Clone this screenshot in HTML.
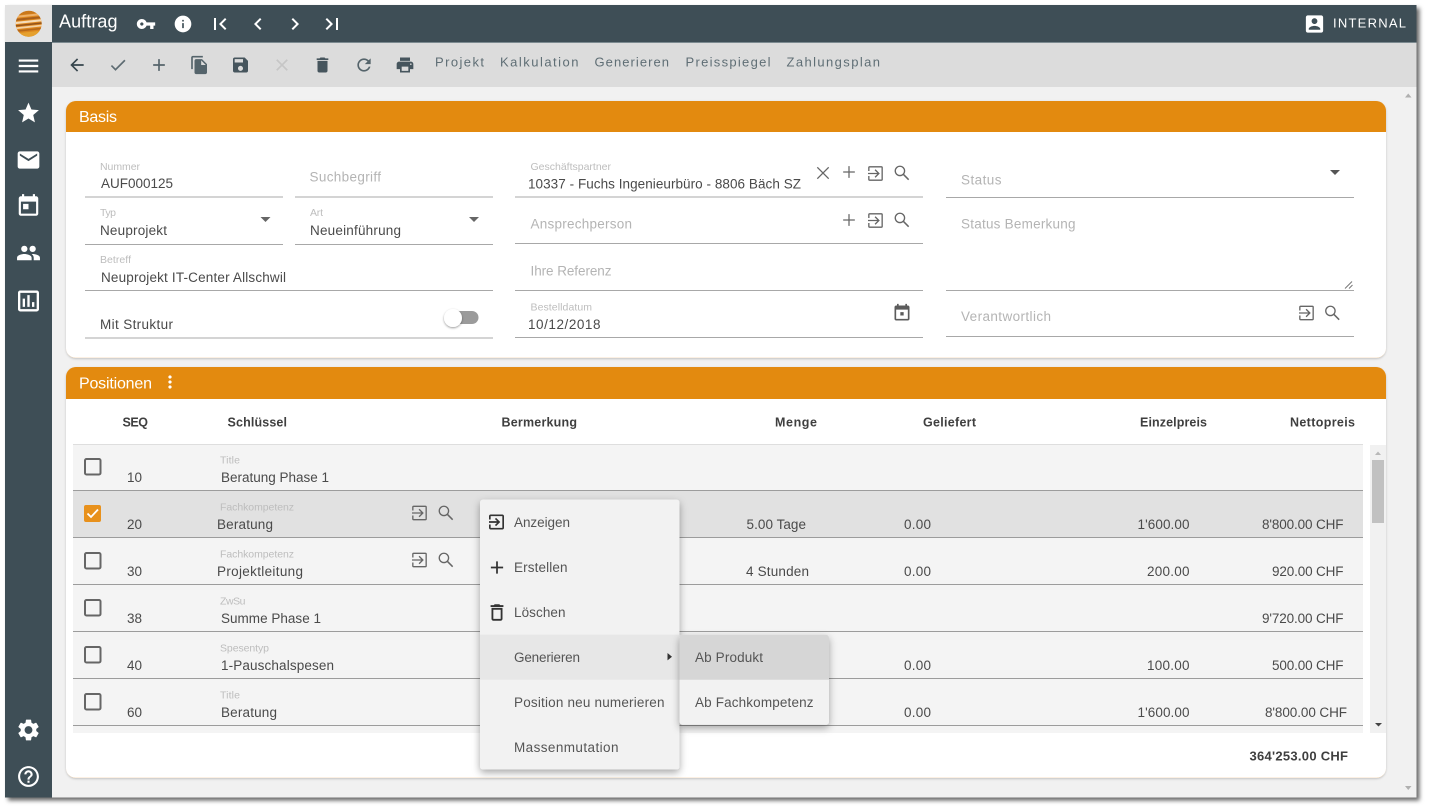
<!DOCTYPE html>
<html><head><meta charset="utf-8"><title>Auftrag</title>
<style>
html,body{margin:0;padding:0;background:#fff;width:1430px;height:811px;overflow:hidden}
svg{display:block}
text{font-family:"Liberation Sans",sans-serif;font-size:13.5px;fill:#4a4a4a}
.v{fill:#4a4a4a}
.l{font-size:10.5px;fill:#bdbdbd}
.p{fill:#b4b4b4}
.h{font-weight:bold;font-size:12.5px;fill:#3f3f3f}
.tb{font-size:13px;fill:#5f6e75}
.m{font-size:13.5px;fill:#555}
.t{font-size:16px;fill:#fff}
.ln{stroke:#a8a8a8;stroke-width:1;fill:none}
.rl{stroke:#9c9c9c;stroke-width:1}
.ck{fill:none;stroke:#666;stroke-width:2}
</style></head><body>
<svg xmlns="http://www.w3.org/2000/svg" width="1430" height="811" viewBox="0 0 1430 811">
<defs>
<filter id="fr" x="-2%" y="-2%" width="104%" height="104%"><feDropShadow dx="3" dy="3" stdDeviation="2" flood-color="#000" flood-opacity=".6"/></filter>
<filter id="cd" x="-2%" y="-5%" width="104%" height="110%"><feDropShadow dx="0" dy="1" stdDeviation="1" flood-color="#000" flood-opacity=".2"/></filter>
<filter id="mn" x="-15%" y="-15%" width="130%" height="130%"><feDropShadow dx="0" dy="3" stdDeviation="4" flood-color="#000" flood-opacity=".35"/></filter>
<filter id="sw" x="-50%" y="-50%" width="200%" height="200%"><feDropShadow dx="0" dy="1" stdDeviation="1" flood-color="#000" flood-opacity=".4"/></filter>
<clipPath id="lg"><circle cx="28.7" cy="23.7" r="13"/></clipPath>
<symbol id="menu" viewBox="0 0 24 24"><path d="M3 18h18v-2H3v2zm0-5h18v-2H3v2zm0-7v2h18V6H3z"/></symbol>
<symbol id="star" viewBox="0 0 24 24"><path d="M12 17.27L18.18 21l-1.64-7.03L22 9.24l-7.19-.61L12 2 9.19 8.63 2 9.24l5.46 4.73L5.82 21z"/></symbol>
<symbol id="mail" viewBox="0 0 24 24"><path d="M20 4H4c-1.1 0-1.99.9-1.99 2L2 18c0 1.1.9 2 2 2h16c1.1 0 2-.9 2-2V6c0-1.1-.9-2-2-2zm0 4l-8 5-8-5V6l8 5 8-5v2z"/></symbol>
<symbol id="today" viewBox="0 0 24 24"><path d="M19 3h-1V1h-2v2H8V1H6v2H5c-1.11 0-1.99.9-1.99 2L3 19c0 1.1.89 2 2 2h14c1.1 0 2-.9 2-2V5c0-1.1-.9-2-2-2zm0 16H5V8h14v11zM7 10h5v5H7z"/></symbol>
<symbol id="event" viewBox="0 0 24 24"><path d="M19 3h-1V1h-2v2H8V1H6v2H5c-1.11 0-1.99.9-1.99 2L3 19c0 1.1.89 2 2 2h14c1.1 0 2-.9 2-2V5c0-1.1-.9-2-2-2zm0 16H5V8h14v11zM10 11h4v4h-4z"/></symbol>
<symbol id="people" viewBox="0 0 24 24"><path d="M16 11c1.66 0 2.99-1.34 2.99-3S17.66 5 16 5c-1.66 0-3 1.34-3 3s1.34 3 3 3zm-8 0c1.66 0 2.99-1.34 2.99-3S9.66 5 8 5C6.34 5 5 6.34 5 8s1.34 3 3 3zm0 2c-2.33 0-7 1.17-7 3.5V19h14v-2.5c0-2.33-4.67-3.5-7-3.5zm8 0c-.29 0-.62.02-.97.05 1.16.84 1.97 1.97 1.97 3.45V19h6v-2.5c0-2.33-4.67-3.5-7-3.5z"/></symbol>
<symbol id="poll" viewBox="0 0 24 24"><path d="M19 3H5c-1.1 0-2 .9-2 2v14c0 1.1.9 2 2 2h14c1.1 0 2-.9 2-2V5c0-1.1-.9-2-2-2zm0 16H5V5h14v14zM7 10h2v7H7zm4-3h2v10h-2zm4 6h2v4h-2z"/></symbol>
<symbol id="gear" viewBox="0 0 24 24"><path d="M19.14 12.94c.04-.3.06-.61.06-.94 0-.32-.02-.64-.07-.94l2.03-1.58c.18-.14.23-.41.12-.61l-1.92-3.32c-.12-.22-.37-.29-.59-.22l-2.39.96c-.5-.38-1.03-.7-1.62-.94l-.36-2.54c-.04-.24-.24-.41-.48-.41h-3.84c-.24 0-.43.17-.47.41l-.36 2.54c-.59.24-1.13.57-1.62.94l-2.39-.96c-.22-.08-.47 0-.59.22L2.74 8.87c-.12.21-.08.47.12.61l2.03 1.58c-.05.3-.09.63-.09.94s.02.64.07.94l-2.03 1.58c-.18.14-.23.41-.12.61l1.92 3.32c.12.22.37.29.59.22l2.39-.96c.5.38 1.03.7 1.62.94l.36 2.54c.05.24.24.41.48.41h3.84c.24 0 .44-.17.47-.41l.36-2.54c.59-.24 1.13-.56 1.62-.94l2.39.96c.22.08.47 0 .59-.22l1.92-3.32c.12-.22.07-.47-.12-.61l-2.01-1.58zM12 15.6c-1.98 0-3.6-1.62-3.6-3.6s1.62-3.6 3.6-3.6 3.6 1.62 3.6 3.6-1.62 3.6-3.6 3.6z"/></symbol>
<symbol id="help" viewBox="0 0 24 24"><path d="M11 18h2v-2h-2v2zm1-16C6.48 2 2 6.48 2 12s4.48 10 10 10 10-4.48 10-10S17.52 2 12 2zm0 18c-4.41 0-8-3.59-8-8s3.59-8 8-8 8 3.59 8 8-3.59 8-8 8zm0-14c-2.21 0-4 1.79-4 4h2c0-1.1.9-2 2-2s2 .9 2 2c0 2-3 1.75-3 5h2c0-2.25 3-2.5 3-5 0-2.21-1.79-4-4-4z"/></symbol>
<symbol id="key" viewBox="0 0 24 24"><path d="M12.65 10C11.83 7.67 9.61 6 7 6c-3.31 0-6 2.69-6 6s2.69 6 6 6c2.61 0 4.83-1.67 5.65-4H17v4h4v-4h2v-4H12.65zM7 14c-1.1 0-2-.9-2-2s.9-2 2-2 2 .9 2 2-.9 2-2 2z"/></symbol>
<symbol id="info" viewBox="0 0 24 24"><path d="M12 2C6.48 2 2 6.48 2 12s4.48 10 10 10 10-4.48 10-10S17.52 2 12 2zm1 15h-2v-6h2v6zm0-8h-2V7h2v2z"/></symbol>
<symbol id="first" viewBox="0 0 24 24"><path d="M18.41 16.59L13.82 12l4.59-4.59L17 6l-6 6 6 6zM6 6h2v12H6z"/></symbol>
<symbol id="left" viewBox="0 0 24 24"><path d="M15.41 7.41L14 6l-6 6 6 6 1.41-1.41L10.83 12z"/></symbol>
<symbol id="right" viewBox="0 0 24 24"><path d="M10 6L8.59 7.41 13.17 12l-4.58 4.59L10 18l6-6z"/></symbol>
<symbol id="last" viewBox="0 0 24 24"><path d="M5.59 7.41L10.18 12l-4.59 4.59L7 18l6-6-6-6zM16 6h2v12h-2z"/></symbol>
<symbol id="acct" viewBox="0 0 24 24"><path d="M3 5v14c0 1.1.89 2 2 2h14c1.1 0 2-.9 2-2V5c0-1.1-.9-2-2-2H5c-1.11 0-2 .9-2 2zm12 4c0 1.66-1.34 3-3 3s-3-1.34-3-3 1.34-3 3-3 3 1.34 3 3zm-9 8c0-2 4-3.1 6-3.1s6 1.1 6 3.1v1H6v-1z"/></symbol>
<symbol id="back" viewBox="0 0 24 24"><path d="M20 11H7.83l5.59-5.59L12 4l-8 8 8 8 1.41-1.41L7.83 13H20v-2z"/></symbol>
<symbol id="check" viewBox="0 0 24 24"><path d="M9 16.17L4.83 12l-1.42 1.41L9 19 21 7l-1.41-1.41z"/></symbol>
<symbol id="add" viewBox="0 0 24 24"><path d="M19 13h-6v6h-2v-6H5v-2h6V5h2v6h6v2z"/></symbol>
<symbol id="copy" viewBox="0 0 24 24"><path d="M16 1H4c-1.1 0-2 .9-2 2v14h2V3h12V1zm-1 4l6 6v10c0 1.1-.9 2-2 2H7.99C6.89 23 6 22.1 6 21l.01-14c0-1.1.89-2 1.99-2h7zm-1 7h5.5L14 6.5V12z"/></symbol>
<symbol id="save" viewBox="0 0 24 24"><path d="M17 3H5c-1.11 0-2 .9-2 2v14c0 1.1.89 2 2 2h14c1.1 0 2-.9 2-2V7l-4-4zm-5 16c-1.66 0-3-1.34-3-3s1.34-3 3-3 3 1.34 3 3-1.34 3-3 3zm3-10H5V5h10v4z"/></symbol>
<symbol id="close" viewBox="0 0 24 24"><path d="M19 6.41L17.59 5 12 10.59 6.41 5 5 6.41 10.59 12 5 17.59 6.41 19 12 13.41 17.59 19 19 17.59 13.41 12z"/></symbol>
<symbol id="del" viewBox="0 0 24 24"><path d="M6 19c0 1.1.9 2 2 2h8c1.1 0 2-.9 2-2V7H6v12zM19 4h-3.5l-1-1h-5l-1 1H5v2h14V4z"/></symbol>
<symbol id="delo" viewBox="0 0 24 24"><path d="M6 19c0 1.1.9 2 2 2h8c1.1 0 2-.9 2-2V7H6v12zM8 9h8v10H8V9zm7.5-5l-1-1h-5l-1 1H5v2h14V4z"/></symbol>
<symbol id="refresh" viewBox="0 0 24 24"><path d="M17.65 6.35C16.2 4.9 14.21 4 12 4c-4.42 0-7.99 3.58-7.99 8s3.57 8 7.99 8c3.73 0 6.84-2.55 7.73-6h-2.08c-.82 2.33-3.04 4-5.65 4-3.31 0-6-2.69-6-6s2.69-6 6-6c1.66 0 3.14.69 4.22 1.78L13 11h7V4l-2.35 2.35z"/></symbol>
<symbol id="print" viewBox="0 0 24 24"><path d="M19 8H5c-1.66 0-3 1.34-3 3v6h4v4h12v-4h4v-6c0-1.66-1.34-3-3-3zm-3 11H8v-5h8v5zm3-7c-.55 0-1-.45-1-1s.45-1 1-1 1 .45 1 1-.45 1-1 1zm-1-9H6v4h12V3z"/></symbol>
<symbol id="input" viewBox="0 0 24 24"><path d="M10.09 15.59L11.5 17l5-5-5-5-1.41 1.41L12.67 11H3v2h9.67l-2.58 2.59zM19 3H5c-1.11 0-2 .9-2 2v4h2V5h14v14H5v-4H3v4c0 1.1.89 2 2 2h14c1.1 0 2-.9 2-2V5c0-1.1-.9-2-2-2z"/></symbol>
<symbol id="inth" viewBox="0 0 24 24"><path d="M4 9V5a1 1 0 0 1 1-1h14a1 1 0 0 1 1 1v14a1 1 0 0 1-1 1H5a1 1 0 0 1-1-1v-4M3 12h13M11.5 7.5L16 12l-4.5 4.5" fill="none" stroke="#666" stroke-width="1.6"/></symbol>
<symbol id="seth" viewBox="0 0 24 24"><circle cx="9.5" cy="9.5" r="5.6" fill="none" stroke="#666" stroke-width="1.6"/><path d="M13.6 13.6L20 20" fill="none" stroke="#666" stroke-width="1.8"/></symbol>
<symbol id="addth" viewBox="0 0 24 24"><path d="M5 12h14M12 5v14" fill="none" stroke="#666" stroke-width="1.5"/></symbol>
<symbol id="xth" viewBox="0 0 24 24"><path d="M5.5 5.5l13 13M18.5 5.5l-13 13" fill="none" stroke="#666" stroke-width="1.5"/></symbol>
<symbol id="more" viewBox="0 0 24 24"><path d="M12 8c1.1 0 2-.9 2-2s-.9-2-2-2-2 .9-2 2 .9 2 2 2zm0 2c-1.1 0-2 .9-2 2s.9 2 2 2 2-.9 2-2-.9-2-2-2zm0 6c-1.1 0-2 .9-2 2s.9 2 2 2 2-.9 2-2-.9-2-2-2z"/></symbol>
</defs>

<!-- frame -->
<rect x="5" y="5" width="1411.5" height="792.5" fill="#f1f1f1" filter="url(#fr)"/>
<rect x="5" y="5" width="47" height="37" fill="#e3e3e3"/>
<rect x="52" y="5" width="1364.5" height="37" fill="#3e4e56"/>
<rect x="52" y="42" width="1364.5" height="1" fill="#7c8a90"/>
<rect x="52" y="43" width="1364.5" height="44" fill="#dcdcdc"/>
<rect x="5" y="42" width="47" height="755.5" fill="#3e4e56"/>

<!-- logo -->
<g clip-path="url(#lg)">
<rect x="15" y="10" width="28" height="28" fill="#dc861e"/>
<g transform="rotate(-6 28.7 23.7)">
<rect x="10" y="11" width="38" height="3" fill="#c9781c"/>
<rect x="10" y="14.5" width="38" height="2" fill="#efb26a"/>
<rect x="10" y="17.5" width="38" height="2" fill="#a85f1c"/>
<rect x="10" y="20.5" width="38" height="2.2" fill="#f5dcb8"/>
<rect x="10" y="23.7" width="38" height="1.5" fill="#94531b"/>
<rect x="10" y="26" width="38" height="1.8" fill="#f4d2a4"/>
<rect x="10" y="29" width="38" height="1.6" fill="#b5681a"/>
<rect x="10" y="32" width="38" height="5" fill="#e5a02e"/>
</g>
</g>

<!-- title bar -->
<text x="59" y="27.5" textLength="58.5" lengthAdjust="spacing" style="font-size:18px;fill:#fff">Auftrag</text>
<g fill="#fff">
<use href="#key" x="136" y="14" width="20" height="20"/>
<use href="#info" x="173" y="14" width="20" height="20"/>
<use href="#first" x="208" y="12" width="24" height="24"/>
<use href="#left" x="246" y="12" width="24" height="24"/>
<use href="#right" x="283" y="12" width="24" height="24"/>
<use href="#last" x="320" y="12" width="24" height="24"/>
<use href="#acct" x="1303" y="12.5" width="23" height="23"/>
</g>
<text x="1333" y="27.5" textLength="73" lengthAdjust="spacing" style="font-size:13px;fill:#fff">INTERNAL</text>

<!-- toolbar -->
<use href="#back" x="67" y="55" width="20" height="20" fill="#36454d"/>
<use href="#check" x="108" y="55" width="20" height="20" fill="#5d6b72"/>
<use href="#add" x="149" y="55" width="20" height="20" fill="#55646b"/>
<use href="#copy" x="189.5" y="55" width="20" height="20" fill="#55646b"/>
<use href="#save" x="230.5" y="55" width="20" height="20" fill="#46555d"/>
<use href="#close" x="272" y="55" width="20" height="20" fill="#c6c6c6"/>
<use href="#del" x="312.5" y="55" width="20" height="20" fill="#46555d"/>
<use href="#refresh" x="354" y="55" width="20" height="20" fill="#55646b"/>
<use href="#print" x="395" y="55" width="20" height="20" fill="#46555d"/>
<text class="tb" x="435" y="66.5" textLength="49" lengthAdjust="spacing">Projekt</text>
<text class="tb" x="500" y="66.5" textLength="78.5" lengthAdjust="spacing">Kalkulation</text>
<text class="tb" x="594.5" y="66.5" textLength="74.5" lengthAdjust="spacing">Generieren</text>
<text class="tb" x="685.5" y="66.5" textLength="85" lengthAdjust="spacing">Preisspiegel</text>
<text class="tb" x="786.5" y="66.5" textLength="93.5" lengthAdjust="spacing">Zahlungsplan</text>

<!-- sidebar -->
<g fill="#fff">
<use href="#menu" x="15.5" y="53" width="26" height="26"/>
<use href="#star" x="16" y="100.5" width="25" height="25"/>
<use href="#mail" x="15.5" y="147" width="26" height="26"/>
<use href="#today" x="15.5" y="193" width="26" height="26"/>
<use href="#people" x="16" y="240.5" width="25" height="25"/>
<use href="#poll" x="14.5" y="287" width="28" height="28"/>
<use href="#gear" x="15.5" y="717" width="26" height="26"/>
<use href="#help" x="16" y="764" width="25" height="25"/>
</g>

<!-- page scroll arrows -->
<path d="M1405 97.5h6.5l-3.25-4z" fill="#b0b0b0"/>
<path d="M1405 786h6.5l-3.25 4z" fill="#b0b0b0"/>

<!-- Basis card -->
<rect x="66" y="101" width="1320" height="257" rx="10" fill="#f0c48e" filter="url(#cd)"/>
<rect x="66" y="120" width="1320" height="237.7" rx="9.5" fill="#fff"/>
<path d="M66 132v-21a10 10 0 0 1 10-10h1300a10 10 0 0 1 10 10v21z" fill="#e38a0f"/>
<text class="t" x="79" y="122" textLength="38" lengthAdjust="spacing">Basis</text>

<g class="ln">
<path d="M85 197h198M295 197h198M515 197h408M946 197.5h408"/>
<path d="M85 244.5h198M295 244.5h198M515 243.5h408"/>
<path d="M85 290.5h408M515 290.5h408M946 290.5h408"/>
<path d="M85 338h408M515 337.5h408M946 336.5h408"/>
</g>

<text class="l" x="100" y="170" textLength="40" lengthAdjust="spacing">Nummer</text>
<text class="v" x="101" y="188" textLength="72" lengthAdjust="spacing">AUF000125</text>
<text class="p" x="309.5" y="181.5" textLength="71.5" lengthAdjust="spacing">Suchbegriff</text>
<text class="l" x="100" y="216" textLength="16" lengthAdjust="spacing">Typ</text>
<text class="v" x="100" y="235" textLength="67" lengthAdjust="spacing">Neuprojekt</text>
<path d="M260.5 217h10l-5 5z" fill="#666"/>
<text class="l" x="310" y="216" textLength="13" lengthAdjust="spacing">Art</text>
<text class="v" x="310" y="235" textLength="91" lengthAdjust="spacing">Neueinführung</text>
<path d="M469 217h10l-5 5z" fill="#666"/>
<text class="l" x="100" y="263" textLength="31" lengthAdjust="spacing">Betreff</text>
<text class="v" x="101" y="282" textLength="185" lengthAdjust="spacing">Neuprojekt IT-Center Allschwil</text>
<text class="v" x="100" y="329" textLength="73" lengthAdjust="spacing">Mit Struktur</text>
<rect x="450" y="311" width="28.5" height="13" rx="6.5" fill="#9b9b9b"/>
<circle cx="453" cy="318" r="9" fill="#fff" filter="url(#sw)"/>

<text class="l" x="530.5" y="170" textLength="80.5" lengthAdjust="spacing">Geschäftspartner</text>
<text class="v" x="528" y="188.5" textLength="273" lengthAdjust="spacing">10337 - Fuchs Ingenieurbüro - 8806 Bäch SZ</text>
<use href="#xth" x="812.5" y="162.5" width="21" height="21"/>
<use href="#addth" x="839" y="162" width="20" height="20"/>
<use href="#inth" x="865.5" y="163.5" width="20" height="20"/>
<use href="#seth" x="892" y="163" width="20" height="20"/>
<text class="p" x="530.5" y="228.5" textLength="101.5" lengthAdjust="spacing">Ansprechperson</text>
<use href="#addth" x="839" y="210" width="20" height="20"/>
<use href="#inth" x="865.5" y="210.5" width="20" height="20"/>
<use href="#seth" x="892" y="210" width="20" height="20"/>
<text class="p" x="530.5" y="275.5" textLength="81" lengthAdjust="spacing">Ihre Referenz</text>
<text class="l" x="530.5" y="310.5" textLength="61.5" lengthAdjust="spacing">Bestelldatum</text>
<text class="v" x="528" y="329" textLength="72.5" lengthAdjust="spacing">10/12/2018</text>
<use href="#event" x="892" y="303" width="20" height="20" fill="#5c5c5c"/>

<text class="p" x="961" y="184.5" textLength="40.5" lengthAdjust="spacing">Status</text>
<path d="M1330 170h10l-5 5z" fill="#555"/>
<text class="p" x="961" y="228.5" textLength="114.5" lengthAdjust="spacing">Status Bemerkung</text>
<path d="M1345 288.5l7-7M1349 288.5l3.5-3.5" stroke="#777" stroke-width="1" fill="none"/>
<text class="p" x="961" y="321" textLength="90" lengthAdjust="spacing">Verantwortlich</text>
<use href="#inth" x="1296.5" y="303" width="20" height="20"/>
<use href="#seth" x="1322.5" y="303" width="20" height="20"/>

<!-- Positionen card -->
<rect x="66" y="367" width="1320" height="411" rx="10" fill="#f0c48e" filter="url(#cd)"/>
<rect x="66" y="390" width="1320" height="387.7" rx="9.5" fill="#fff"/>
<path d="M66 399v-22a10 10 0 0 1 10-10h1300a10 10 0 0 1 10 10v22z" fill="#e38a0f"/>
<text class="t" x="79" y="388.5" textLength="73" lengthAdjust="spacing">Positionen</text>
<use href="#more" x="160" y="372" width="20" height="20" fill="#fff"/>

<text class="h" x="122.5" y="426.5" textLength="25.5" lengthAdjust="spacing">SEQ</text>
<text class="h" x="227.5" y="426.5" textLength="59.5" lengthAdjust="spacing">Schlüssel</text>
<text class="h" x="501.5" y="426.5" textLength="75.5" lengthAdjust="spacing">Bermerkung</text>
<text class="h" x="775" y="426.5" textLength="42" lengthAdjust="spacing">Menge</text>
<text class="h" x="923" y="426.5" textLength="53" lengthAdjust="spacing">Geliefert</text>
<text class="h" x="1140" y="426.5" textLength="67" lengthAdjust="spacing">Einzelpreis</text>
<text class="h" x="1290" y="426.5" textLength="65" lengthAdjust="spacing">Nettopreis</text>

<rect x="73" y="444" width="1290" height="289" fill="#f4f4f4"/>
<rect x="73" y="444" width="1290" height="1" fill="#dedede"/>
<rect x="73" y="491" width="1290" height="46" fill="#e1e1e1"/>
<g class="rl">
<path d="M73 490.5h1290M73 537.5h1290M73 584.5h1290M73 631.5h1290M73 678.5h1290M73 725.5h1290"/>
</g>

<rect x="1370" y="445" width="16" height="288" fill="#f1f1f1"/>
<rect x="1372" y="460" width="12" height="63" fill="#c1c1c1"/>
<path d="M1375 455h6l-3-3.5z" fill="#b8b8b8"/>
<path d="M1375 723h7l-3.5 3.5z" fill="#444"/>

<!-- checkboxes -->
<rect class="ck" x="85" y="459" width="15.5" height="15.5" rx="1.5"/>
<rect x="84" y="505" width="17" height="17" rx="2" fill="#e8911c"/>
<path d="M87.5 513.5l3.5 3.5 7-7.5" fill="none" stroke="#fff" stroke-width="1.8"/>
<rect class="ck" x="85" y="553" width="15.5" height="15.5" rx="1.5"/>
<rect class="ck" x="85" y="600" width="15.5" height="15.5" rx="1.5"/>
<rect class="ck" x="85" y="647" width="15.5" height="15.5" rx="1.5"/>
<rect class="ck" x="85" y="694" width="15.5" height="15.5" rx="1.5"/>

<!-- rows -->
<text class="v" x="127" y="482" textLength="15" lengthAdjust="spacing">10</text>
<text class="l" x="220" y="463.5" textLength="20" lengthAdjust="spacing">Title</text>
<text class="v" x="221" y="482" textLength="108" lengthAdjust="spacing">Beratung Phase 1</text>

<text class="v" x="127" y="529" textLength="15" lengthAdjust="spacing">20</text>
<text class="l" x="220" y="510.5" textLength="74" lengthAdjust="spacing">Fachkompetenz</text>
<text class="v" x="217" y="529" textLength="56" lengthAdjust="spacing">Beratung</text>
<use href="#inth" x="409.5" y="503" width="20" height="20"/>
<use href="#seth" x="436" y="503" width="20" height="20"/>
<text class="v" x="746.5" y="529" textLength="59.5" lengthAdjust="spacing">5.00 Tage</text>
<text class="v" x="904" y="529" textLength="27" lengthAdjust="spacing">0.00</text>
<text class="v" x="1137.5" y="529" textLength="52" lengthAdjust="spacing">1'600.00</text>
<text class="v" x="1262" y="529" textLength="81.5" lengthAdjust="spacing">8'800.00 CHF</text>

<text class="v" x="127" y="576" textLength="15" lengthAdjust="spacing">30</text>
<text class="l" x="220" y="557.5" textLength="74" lengthAdjust="spacing">Fachkompetenz</text>
<text class="v" x="217" y="576" textLength="86" lengthAdjust="spacing">Projektleitung</text>
<use href="#inth" x="409.5" y="550" width="20" height="20"/>
<use href="#seth" x="436" y="550" width="20" height="20"/>
<text class="v" x="746" y="576" textLength="63" lengthAdjust="spacing">4 Stunden</text>
<text class="v" x="904" y="576" textLength="27" lengthAdjust="spacing">0.00</text>
<text class="v" x="1147" y="576" textLength="42.5" lengthAdjust="spacing">200.00</text>
<text class="v" x="1272" y="576" textLength="71.5" lengthAdjust="spacing">920.00 CHF</text>

<text class="v" x="127" y="623" textLength="15" lengthAdjust="spacing">38</text>
<text class="l" x="220" y="604.5" textLength="25.5" lengthAdjust="spacing">ZwSu</text>
<text class="v" x="221" y="623" textLength="100" lengthAdjust="spacing">Summe Phase 1</text>
<text class="v" x="1262" y="623" textLength="81.5" lengthAdjust="spacing">9'720.00 CHF</text>

<text class="v" x="127" y="670" textLength="15" lengthAdjust="spacing">40</text>
<text class="l" x="220" y="651.5" textLength="49" lengthAdjust="spacing">Spesentyp</text>
<text class="v" x="221" y="670" textLength="113" lengthAdjust="spacing">1-Pauschalspesen</text>
<text class="v" x="904" y="670" textLength="27" lengthAdjust="spacing">0.00</text>
<text class="v" x="1147" y="670" textLength="42.5" lengthAdjust="spacing">100.00</text>
<text class="v" x="1272" y="670" textLength="71.5" lengthAdjust="spacing">500.00 CHF</text>

<text class="v" x="127" y="717" textLength="15" lengthAdjust="spacing">60</text>
<text class="l" x="220" y="698.5" textLength="20" lengthAdjust="spacing">Title</text>
<text class="v" x="221" y="717" textLength="56" lengthAdjust="spacing">Beratung</text>
<text class="v" x="904" y="717" textLength="27" lengthAdjust="spacing">0.00</text>
<text class="v" x="1137.5" y="717" textLength="52" lengthAdjust="spacing">1'600.00</text>
<text class="v" x="1265" y="717" textLength="82" lengthAdjust="spacing">8'800.00 CHF</text>

<text x="1249.5" y="760.5" textLength="98.5" lengthAdjust="spacing" style="font-weight:bold;font-size:13px;fill:#3f3f3f">364'253.00 CHF</text>

<!-- menus -->
<rect x="480" y="499.5" width="199.5" height="270" rx="3" fill="#f2f2f2" filter="url(#mn)"/>
<rect x="480" y="634.7" width="199.5" height="45" fill="#e7e7e7"/>
<rect x="679.5" y="634.7" width="149.5" height="90" rx="3" fill="#f2f2f2" filter="url(#mn)"/>
<path d="M679.5 634.7h146.5a3 3 0 0 1 3 3v42h-149.5z" fill="#d6d6d6"/>

<use href="#input" x="486.5" y="512" width="20" height="20" fill="#333"/>
<use href="#add" x="486.5" y="557" width="21" height="21" fill="#333"/>
<use href="#delo" x="486" y="601.5" width="22" height="22" fill="#333"/>
<text class="m" x="514" y="527" textLength="56" lengthAdjust="spacing">Anzeigen</text>
<text class="m" x="514" y="572" textLength="53.5" lengthAdjust="spacing">Erstellen</text>
<text class="m" x="514" y="617" textLength="51.5" lengthAdjust="spacing">Löschen</text>
<text class="m" x="514" y="662" textLength="66" lengthAdjust="spacing">Generieren</text>
<text class="m" x="514" y="707" textLength="150.5" lengthAdjust="spacing">Position neu numerieren</text>
<text class="m" x="514" y="752" textLength="104.5" lengthAdjust="spacing">Massenmutation</text>
<path d="M667.5 653l4.5 3.7-4.5 3.7z" fill="#333"/>
<text class="m" x="695" y="662" textLength="68" lengthAdjust="spacing">Ab Produkt</text>
<text class="m" x="695" y="707" textLength="118.5" lengthAdjust="spacing">Ab Fachkompetenz</text>
</svg>
</body></html>
